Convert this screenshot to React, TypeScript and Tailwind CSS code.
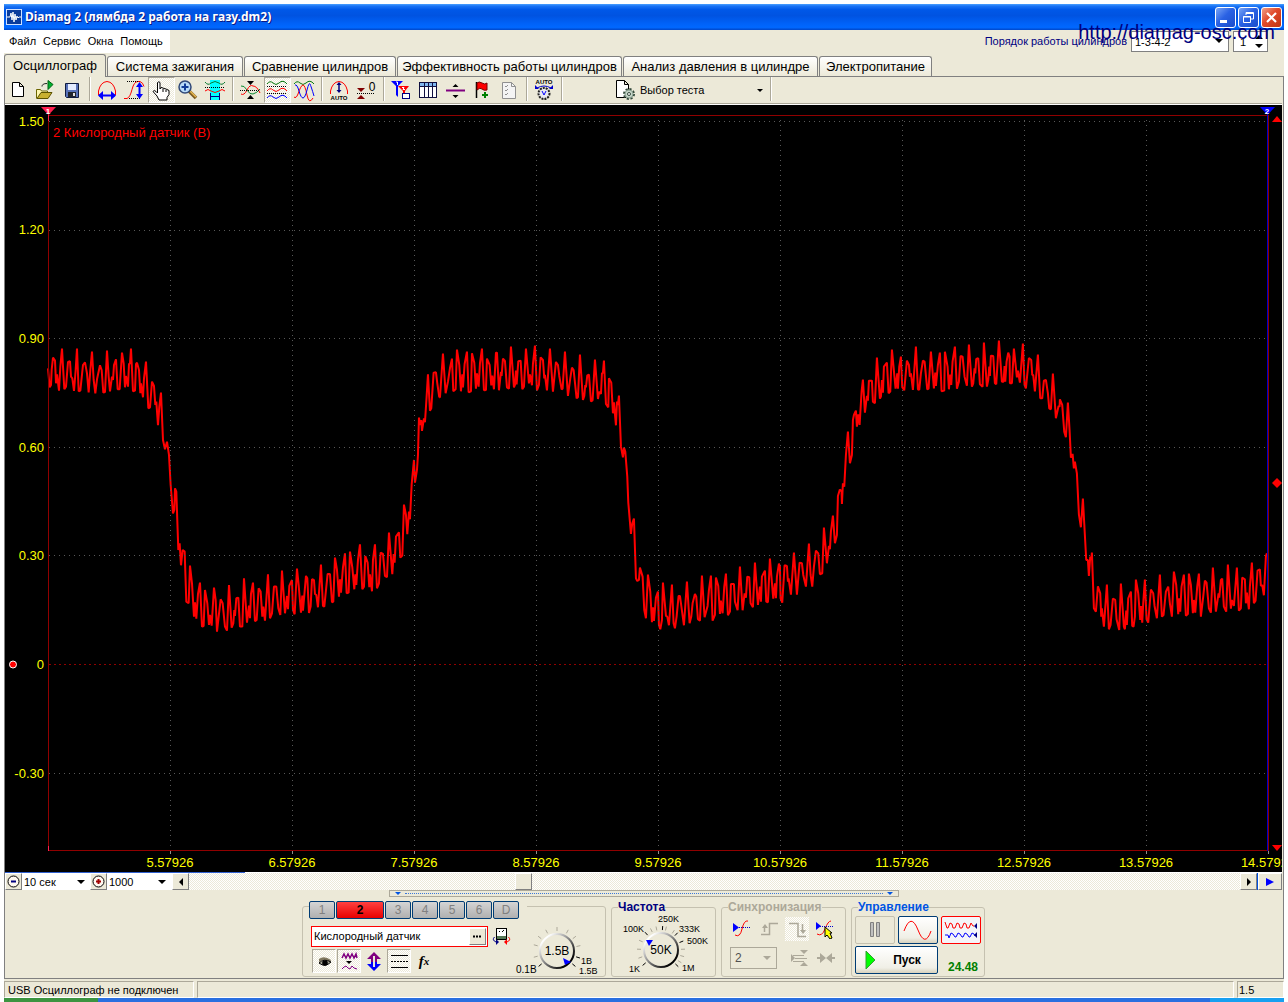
import React from "react";

const TRACE = [
  {
    shift: "translate(-24 645)",
    points:
      "24,115 29,172 33,165 35,120 39,83 45,92 48,160 51,133 57,182 61,110 66,56 69,110 73,178 78,170 84,96 90,94 93,140 97,145 102,183 107,120 111,56 116,184 121,182 129,105 135,97 141,130 146,187 151,120 156,65 161,150 166,190 171,148 180,106 185,120 190,188 195,186 201,62 206,140 210,184 216,140 219,150 222,105 228,88 233,178 239,178 246,68 251,100 255,172 258,138 264,170 267,102 270,100 273,56 279,184 285,182 288,102 291,98 297,120 301,190 303,160 309,202 312,145 318,95 325,235 330,232 336,155 342,168 346,225 349,215 354,286 358,230 363,188 369,330 375,358 381,335 387,375 392,465 399,550 403,540 405,475 409,485 415,660 419,640 423,706 428,660 434,665 439,815 446,820 450,707 456,760 462,860 465,817 469,866 474,792 480,758 486,890 491,888 495,780 502,820 507,885 510,855 515,887 522,773 527,810 531,905 537,852 542,808 548,820 555,890 561,902 567,765 575,893 580,880 583,840 585,858 589,805 595,803 600,890 607,890 612,745 621,878 627,827 630,865 633,792 639,758 645,874 650,870 656,775 662,785 667,860 670,830 675,872 684,733 690,865 696,850 702,770 709,770 715,835 721,855 726,722 735,850 741,798 744,838 748,768 756,750 759,840 764,853 771,716 776,765 783,848 787,797 789,842 798,738 802,745 807,849 812,830 816,748 822,750 825,792 829,795 834,832 843,704 849,828 853,830 863,732 870,732 876,817 880,815 885,683 891,720 897,800 900,748 903,788 909,712 915,670 920,790 926,788 930,665 937,712 943,778 946,733 949,765 954,690 960,643 967,778 972,770 976,678 983,698 988,772 990,733 996,784 999,690 1005,643 1011,775 1017,760 1022,668 1029,672 1035,738 1041,742 1047,608 1057,733 1061,672 1064,698 1068,620 1077,607 1081,683 1087,677 1092,524 1098,555 1102,613 1107,545 1110,568 1115,465 1122,390 1125,458 1131,420 1134,375 1137,263 1141,285 1144,270 1146,303 1152,265 1155,277 1160,200 1164,133 1170,242 1174,235 1181,128 1188,127 1192,160 1198,202",
  },
  {
    shift: "translate(1056 645)",
    points:
      "118,202 120,202 129,71 137,190 144,155 150,115 156,86 160,184 167,178 171,59 178,105 183,184 187,133 189,172 194,102 201,65 206,187 213,184 216,70 223,98 228,176 231,130 236,170 240,100 246,56 252,181 258,180 261,86 269,105 274,166 277,137 282,178 288,68 291,68 297,181 303,126 305,138 309,86 315,93 321,172 327,176 333,50 342,172 345,165 348,122 350,163 355,94 362,92 367,178 372,170 378,56 387,160 390,133 396,166 399,102 405,47 411,181 417,165 422,82 429,90 433,145 435,135 441,181 450,56 459,185 468,96 474,105 478,138 485,178 488,176 495,65 504,198 511,145 516,113 521,120 530,205 534,202 540,74 549,210 553,198 556,165 558,172 562,136 567,134 573,214 578,211 585,89 594,207 598,185 603,192 606,130 609,128 612,92 618,222 625,232 627,145 634,158 639,250 642,217 648,286 651,215 654,225 657,197 663,350 669,382 672,353 676,365 682,440 685,517 693,612 697,580 702,566 708,745 712,753 717,750 720,713 728,740 733,840 738,865 744,734 751,785 756,877 759,832 762,873 768,803 774,785 777,885 781,898 786,870 789,758 798,858 802,860 807,886 816,764 821,880 825,895 830,860 836,798 840,798 852,886 861,755 869,880 874,860 878,820 885,792 889,800 894,868 900,872 906,737 914,862 923,828 927,780 933,737 938,872 945,855 948,743 955,768 960,852 963,812 968,850 973,770 978,731 984,856 990,845 993,762 1002,762 1005,815 1013,841 1020,710 1028,841 1034,790 1038,803 1042,740 1048,742 1052,820 1059,832 1065,698 1074,825 1080,770 1083,815 1086,740 1095,722 1099,815 1104,817 1110,686 1120,806 1125,760 1128,805 1131,740 1137,701 1140,710 1142,805 1147,818 1154,706 1161,708 1164,755 1166,745 1173,794 1182,668 1191,794 1199,698 1206,700 1210,735 1218,770 1227,641 1232,735 1237,770 1242,710 1248,662 1255,670 1260,733 1267,730 1272,593 1281,700 1287,648 1290,658 1293,605 1299,557 1305,640 1311,615 1314,498 1320,478",
  },
  {
    shift: "translate(2316 645)",
    points:
      "60,478 65,485 66,522 69,460 73,470 78,375 84,305 90,400 96,375 99,270 102,255 108,242 111,290 115,253 119,285 125,185 129,149 135,248 141,198 144,212 147,152 156,152 159,215 165,220 171,83 180,206 183,200 186,150 189,188 192,110 201,98 206,190 211,185 216,59 227,176 232,130 234,176 238,110 243,80 247,172 253,181 261,92 267,105 270,140 273,130 279,180 288,50 294,178 298,180 303,130 309,92 314,95 322,178 326,176 333,65 342,175 346,128 348,168 354,105 360,68 365,184 373,182 375,65 383,110 387,178 391,134 394,165 398,95 405,50 411,176 417,155 422,78 428,80 434,140 441,167 447,44 456,170 460,160 464,115 466,130 469,87 475,85 480,163 488,170 492,38 501,170 505,150 508,110 510,138 513,77 520,78 525,160 529,163 537,32 546,155 551,155 554,108 556,155 560,95 565,68 569,80 570,160 576,160 582,56 591,142 594,122 600,158 609,41 614,165 618,175 627,84 634,90 637,135 640,135 645,184 654,74 661,205 667,205 672,152 678,150 684,190 688,235 693,238 699,131 708,265 716,228 719,230 720,208 727,225 733,305 738,322 744,218 749,300 753,383 758,372 762,415 765,395 771,430 777,553 783,592 789,506 793,580 799,690 804,690 807,738 811,680 814,690 816,668 822,835 828,845 834,769 841,790 844,860 846,835 852,890 861,764 867,898 872,885 879,806 886,810 890,868 898,900 903,761 912,890 915,898 919,842 921,885 925,805 933,785 937,888 941,890 945,860 948,749 955,790 961,870 964,828 967,878 970,820 975,749 980,868 985,878 993,779 1000,790 1004,828 1011,865 1020,734 1026,860 1031,855 1038,785 1045,770 1050,820 1056,860 1062,725 1069,765 1075,853 1078,805 1081,845 1085,770 1092,734 1098,857 1104,852 1107,731 1113,765 1119,850 1122,810 1126,848 1132,770 1137,731 1143,860 1150,800 1155,752 1160,758 1167,835 1173,848 1179,713 1188,845 1196,790 1198,803 1203,750 1207,746 1212,830 1219,845 1224,704 1233,836 1236,810 1242,828 1251,713 1257,842 1263,835 1267,743 1275,748 1278,820 1281,788 1287,838 1290,770 1296,698 1302,820 1307,812 1313,722 1320,718 1323,768 1327,765 1332,796 1338,680 1341,670",
  },
];

const Y_LABELS = ["1.50", "1.20", "0.90", "0.60", "0.30", "0", "-0.30"];
const X_LABELS = ["5.57926", "6.57926", "7.57926", "8.57926", "9.57926", "10.57926", "11.57926", "12.57926", "13.57926", "14.57926"];
const PLOT_W = 1221;
const PLOT_H = 736;
const gridY = (i: number) => Math.round(6 + i * 108.6) + 0.5;
const gridX = (i: number) => (i + 1) * 122 + 0.5;

const CHECKER = "bg-[repeating-conic-gradient(#ffffff_0_25%,#ece9d8_0_50%)] bg-[length:2px_2px]";

function Icon({ w = 24, h = 24, children }: { w?: number; h?: number; children: React.ReactNode }) {
  return (
    <svg width={w} height={h} viewBox={`0 0 ${w} ${h}`} fill="none" className="shrink-0" aria-hidden="true">
      {children}
    </svg>
  );
}

function ToolButton({ label, pressed, children }: { label: string; pressed?: boolean; children: React.ReactNode }) {
  return (
    <button
      type="button"
      aria-label={label}
      aria-pressed={pressed}
      className={`flex h-[26px] w-[27px] shrink-0 items-center ${
        pressed ? "border border-t-[#aca899] border-l-[#aca899] border-r-white border-b-white " + CHECKER : "pl-px"
      }`}
    >
      <Icon>{children}</Icon>
    </button>
  );
}

function ToolSep() {
  return (
    <div className="flex h-6 w-2 shrink-0 justify-center" role="separator">
      <div className="w-px bg-[#aca899]" />
      <div className="w-px bg-white" />
    </div>
  );
}

function TitleBar() {
  return (
    <header className="flex h-[26px] shrink-0 items-center bg-[linear-gradient(180deg,#4aa0ff_0%,#1b74f5_8%,#0058e8_22%,#0053e1_45%,#0062f8_75%,#0068ff_90%,#0046c8_100%)] px-[2px]">
      <svg width="16" height="16" viewBox="0 0 16 16" className="shrink-0" aria-hidden="true">
        <rect x="0.5" y="0.5" width="15" height="15" fill="#0a3c9c" stroke="#cfe0ff" />
        <path d="M1 8h3l1-4 1 7 1-8 1 10 1-8 1 6 1-4 1 2 1-1h2" stroke="#fff" fill="none" />
      </svg>
      <h1 className="ml-[3px] grow whitespace-nowrap font-['Noto_Sans','Open_Sans',sans-serif] text-[12px] leading-5 font-bold text-white [text-shadow:1px_1px_0_#0a1883]">
        Diamag 2 (лямбда 2 работа на газу.dm2)
      </h1>
      <div className="flex gap-[2px]">
        <button type="button" aria-label="Свернуть" className="flex h-[21px] w-[21px] items-center justify-center rounded-[3px] border border-white bg-[linear-gradient(135deg,#7aa5f5,#2a62e4_45%,#1a4ccb)]">
          <Icon w={17} h={17}><rect x="3" y="11" width="7" height="3" fill="#fff" /></Icon>
        </button>
        <button type="button" aria-label="Восстановить" className="flex h-[21px] w-[21px] items-center justify-center rounded-[3px] border border-white bg-[linear-gradient(135deg,#7aa5f5,#2a62e4_45%,#1a4ccb)]">
          <Icon w={17} h={17}>
            <path d="M6 6V3.500h7.500V10H11M6 4.500h7" stroke="#fff" />
            <path d="M3.500 7.500h7v6h-7zM3 8h8" stroke="#fff" />
          </Icon>
        </button>
        <button type="button" aria-label="Закрыть" className="flex h-[21px] w-[21px] items-center justify-center rounded-[3px] border border-white bg-[linear-gradient(135deg,#f0a088,#e0492a_45%,#c03412)]">
          <Icon w={17} h={17}><path d="M4 4l9 9M13 4l-9 9" stroke="#fff" strokeWidth="2.200" /></Icon>
        </button>
      </div>
    </header>
  );
}

function MenuRow() {
  return (
    <div className="flex h-6 shrink-0 items-start justify-between">
      <nav className="flex h-[23px] w-[166px] items-center gap-[7px] bg-white pl-[5px] text-[11px]">
        {["Файл", "Сервис", "Окна", "Помощь"].map((m) => (
          <button key={m} type="button">{m}</button>
        ))}
      </nav>
      <div className="flex items-center pt-px pr-4 text-[11px]">
        <label htmlFor="order" className="mr-1 whitespace-nowrap text-[#000080]">Порядок работы цилиндров</label>
        <div className="relative mr-1">
          <select id="order" className="block h-[21px] w-[98px] appearance-none border border-[#808080] bg-white px-[3px] leading-4">
            <option>1-3-4-2</option>
          </select>
          <span className="pointer-events-none absolute top-2 right-[6px] border-x-4 border-t-4 border-x-transparent border-t-black" />
        </div>
        <div className="relative">
          <input aria-label="Номер цилиндра" defaultValue="1" className="block h-[21px] w-[35px] border border-[#808080] bg-white px-[6px] leading-4" />
          <span className="pointer-events-none absolute top-1 right-[5px] border-x-4 border-b-4 border-x-transparent border-b-black" />
          <span className="pointer-events-none absolute right-[5px] bottom-1 border-x-4 border-t-4 border-x-transparent border-t-black" />
        </div>
      </div>
    </div>
  );
}

function Tabs() {
  const tabs: [string, string][] = [
    ["Осциллограф", "w-[102px]"],
    ["Система зажигания", "w-[136px]"],
    ["Сравнение цилиндров", "w-[152px]"],
    ["Эффективность работы цилиндров", "w-[225px]"],
    ["Анализ давления в цилиндре", "w-[195px]"],
    ["Электропитание", "w-[113px]"],
  ];
  return (
    <div role="tablist" className="flex h-[22px] shrink-0 items-end gap-px">
      {tabs.map(([t, w], i) => (
        <button
          key={t}
          type="button"
          role="tab"
          aria-selected={i === 0}
          className={`${w} shrink-0 rounded-t-[3px] border border-b-0 border-[#808080] text-center text-[13px] leading-[18px] whitespace-nowrap ${
            i === 0 ? "relative -mb-px h-[23px] bg-[#ece9d8]" : "h-5 bg-[linear-gradient(180deg,#ffffff,#ece9d8)]"
          }`}
        >
          {t}
        </button>
      ))}
    </div>
  );
}

function Toolbar() {
  return (
    <div className="flex h-[28px] shrink-0 items-start border-b border-b-white shadow-[inset_0_-1px_0_#aca899]">
      <ToolButton label="Новый">
        <path d="M6.500 4.500h7l4 4v10h-11zM13.500 4.500v4h4" fill="#fff" stroke="#000" />
      </ToolButton>
      <ToolButton label="Открыть">
        <path d="M3.500 20.500v-9h4l1 1.500h6v3" fill="#fff7b0" stroke="#6b6500" />
        <path d="M4 20.500l4-6h11l-4 6z" fill="#c8b030" stroke="#5a5200" />
        <path d="M9 8.500q0-3 5-3" stroke="#222" />
        <path d="M15 2.500l5 4-5 5z" fill="#00b030" stroke="#006010" />
      </ToolButton>
      <ToolButton label="Сохранить">
        <path d="M5.500 5.500h13v14h-12l-1-1z" fill="#5872b8" stroke="#101c40" />
        <rect x="8" y="6" width="8" height="6" fill="#e4ecff" />
        <rect x="8" y="14" width="8" height="5" fill="#20242c" />
        <rect x="13" y="15" width="2" height="3" fill="#e0e0e0" />
      </ToolButton>
      <ToolSep />
      <ToolButton label="Масштаб по горизонтали">
        <path d="M3.500 17v-4q2-9 8.500-9.500 6.500.500 8.500 9.500v4" stroke="#f00" />
        <path d="M4 17.500h16" stroke="#00f" strokeWidth="2" />
        <path d="M8 13v9l-5-4.500zM16 13v9l5-4.500z" fill="#00f" />
      </ToolButton>
      <ToolButton label="Масштаб по вертикали">
        <path d="M2 20.500h3q3-1 5-9t6-8h2q3 1 4 5" stroke="#f00" />
        <path d="M5 3.500h11M7 20.500h12" stroke="#000" strokeDasharray="1 1" />
        <path d="M17.500 6v13" stroke="#00f" strokeWidth="2" />
        <path d="M14 9l3.500-5L21 9zM14 16l3.500 5 3.500-5z" fill="#00f" />
      </ToolButton>
      <ToolButton label="Рука" pressed>
        <path d="M8.500 15V4.500q1.500-1.500 2.500 0V11l1-1.500 2 .5 1 .5 2 .5 1 .5 2 1v4l-2 3v2.500h-8l-2-4-4-4.500q1-2 3 0z" fill="#fff" stroke="#000" />
        <path d="M14 11v3M17 12v2" stroke="#000" />
      </ToolButton>
      <ToolButton label="Лупа">
        <path d="M13 13l7 7" stroke="#7a5a20" strokeWidth="3.500" />
        <path d="M14 13l6 6" stroke="#e8b850" strokeWidth="1.500" />
        <circle cx="9" cy="9" r="6" fill="#b8dcf8" stroke="#304878" strokeWidth="1.500" />
        <path d="M9 5.500v7M5.500 9h7" stroke="#103c98" strokeWidth="2" />
      </ToolButton>
      <ToolButton label="Выделить участок">
        <rect x="7" y="2" width="10" height="20" fill="#00ffff" />
        <path d="M2 4q3 4 6 1 4-3 8 0 3 3 6-1" stroke="#087a30" />
        <path d="M2 9.500h20" stroke="#000" strokeDasharray="1 1" />
        <path d="M2 13q3-3 6 0 4 3 8 0 3-3 6 0" stroke="#f00" />
        <path d="M7.500 15v7M16.500 15v7M8 18.500h8" stroke="#000080" />
      </ToolButton>
      <ToolSep />
      <ToolButton label="Совместить">
        <path d="M3 8q3-1 6 4t6 4q4-1 7-5" stroke="#0a8a30" />
        <path d="M3 16q3 2 6-4t6-4q4 0 7 7" stroke="#f00" />
        <path d="M2 12.500h20" stroke="#000" strokeDasharray="1 1" />
        <path d="M9 3h7l-3.500 4zM9 21h7l-3.500-4z" fill="#000" />
      </ToolButton>
      <ToolButton label="Раздельно" pressed>
        <path d="M2 6q3-4 6-1t6 0q4-4 8 1" stroke="#087a10" />
        <path d="M2 13q3-4 6-1t6 0q4-4 8 1" stroke="#f00" />
        <path d="M2 20q3-4 6-1t6 0q4-4 8 1" stroke="#00f" />
        <path d="M2 8.500h20M2 15.500h20" stroke="#000" strokeDasharray="1 1" />
      </ToolButton>
      <ToolButton label="Вместе">
        <path d="M2 6q3-4 6-1t6 0q4-4 8 1" stroke="#087a10" />
        <path d="M2 19q2 2 4-3 3-9 5-9t4 10 6 3" stroke="#f00" />
        <path d="M3 7q2-1 4 6t4 7q2 0 4-8t3-6 4 12" stroke="#00f" />
      </ToolButton>
      <ToolSep />
      <ToolButton label="Авто размах">
        <path d="M3.500 16v-3q2-9 8.500-9.500 6.500.500 8.500 9.500v3" stroke="#f00" />
        <path d="M12 5v9" stroke="#000080" strokeWidth="1.500" />
        <path d="M9.500 7l2.500-3 2.500 3zM9.500 12l2.500 3 2.500-3z" fill="#000080" />
        <text x="12" y="22" textAnchor="middle" fontSize="6" fontWeight="bold" fill="#000">AUTO</text>
      </ToolButton>
      <ToolButton label="Ноль">
        <path d="M3 10h8l-4 4zM3 21h8l-4-4z" fill="#800000" />
        <path d="M3 15.500h18" stroke="#000" strokeDasharray="1 1" />
        <text x="18" y="13" textAnchor="middle" fontSize="12" fill="#000">0</text>
      </ToolButton>
      <ToolSep />
      <ToolButton label="Фильтры">
        <path d="M2 3h12l-5 5v11l-2-2V8z" fill="#00f" />
        <path d="M9 8h11l-4 5v5l-2 1v-6z" fill="#f00" />
        <path d="M7 4h1.500v3M13 9.500h2l-1 2h2" stroke="#fff" />
        <rect x="13.500" y="15.500" width="7" height="5" fill="#fff" stroke="#000080" />
      </ToolButton>
      <ToolButton label="Таблица">
        <rect x="3.500" y="4.500" width="17" height="15" fill="#fff" stroke="#101040" />
        <rect x="4" y="5" width="16" height="3" fill="#80b8f0" />
        <path d="M4 8.500h16M8.500 5v14M12.500 5v14M16.500 5v14" stroke="#101040" />
      </ToolButton>
      <ToolButton label="Уровень">
        <path d="M3 12.500h19" stroke="#800080" strokeWidth="2" />
        <path d="M9.500 9l3-3 3 3zM9.500 17l3 3 3-3z" fill="#000" />
      </ToolButton>
      <ToolButton label="Добавить метку">
        <path d="M6.500 4v16" stroke="#000" strokeWidth="1.500" />
        <path d="M7 5q2-2 5 0t5 0v7q-3 1-5-1t-5 1z" fill="#f00" stroke="#700" />
        <path d="M15 14v6M12 17h6" stroke="#008000" strokeWidth="2" />
      </ToolButton>
      <ToolButton label="Список">
        <path d="M5.500 4.500h9l4 4v12h-13z" fill="#f4f4f4" stroke="#909090" />
        <path d="M14.500 4.500v4h4M8 8l1 1 2-2M8 12l1 1 2-2M8 16l1 1 2-2" stroke="#909090" />
      </ToolButton>
      <ToolSep />
      <ToolButton label="Авто поиск">
        <text x="12" y="6" textAnchor="middle" fontSize="6" fontWeight="bold" fill="#000">AUTO</text>
        <path d="M5 10q7-4 14 0" stroke="#00c" />
        <path d="M3 7v4h4zM21 7v4h-4z" fill="#00c" />
        <circle cx="12" cy="15.500" r="5.500" fill="#e8e8f0" stroke="#222" strokeWidth="2" strokeDasharray="2 1" />
        <path d="M10 13l2 4 2-4" stroke="#00f" />
      </ToolButton>
      <ToolSep />
      <button type="button" className="flex h-[26px] w-[201px] shrink-0 items-center pl-[46px] text-left text-[11px]">
        <Icon>
          <path d="M4.500 2.500h8l4 4v13h-12zM12.500 2.500v4h4" fill="#fff" stroke="#000" />
          <circle cx="17" cy="16" r="4.500" fill="#b8ccc0" stroke="#354a3c" strokeWidth="3" strokeDasharray="2 1.500" />
          <circle cx="17" cy="16" r="4" fill="#c4d4c8" stroke="#8aa090" />
          <circle cx="17" cy="16" r="1.500" fill="#fff" stroke="#354a3c" />
        </Icon>
        <span className="ml-1 grow">Выбор теста</span>
        <span className="mr-1 border-x-[3px] border-t-[3px] border-x-transparent border-t-black" />
      </button>
      <ToolSep />
    </div>
  );
}

function Chart() {
  return (
    <section aria-label="Осциллограмма" className="grid min-h-[400px] grow grid-cols-[43px_minmax(0,1fr)_13px] grid-rows-[10px_minmax(0,1fr)_21px] overflow-hidden bg-black text-[13px]">
      <div />
      <svg width="100%" height="10" className="overflow-visible" aria-hidden="true">
        <path d="M-7 2H8L.500 10z" fill="#ff2050" />
        <text x="0" y="9" textAnchor="middle" fontSize="8" fontWeight="bold" fill="#fff">1</text>
        <svg x="100%" className="overflow-visible">
          <path d="M-9 2H6l-7.500 8z" fill="#0000ff" />
          <text x="-2" y="9" textAnchor="middle" fontSize="8" fontWeight="bold" fill="#fff">2</text>
        </svg>
      </svg>
      <div />

      <svg width="100%" height="100%" className="block min-h-0 overflow-visible">
        {Y_LABELS.map((t, i) => (
          <text key={t} x="39" y={`${((gridY(i) + 4) / PLOT_H) * 100}%`} textAnchor="end" fill="#ffff00">{t}</text>
        ))}
        <circle cx="8" cy={`${(gridY(5) / PLOT_H) * 100}%`} r="3.500" fill="#ff0000" stroke="#ffffff" />
      </svg>
      <div className="relative min-h-0">
        <svg width="100%" height="100%" viewBox={`0 0 ${PLOT_W} ${PLOT_H}`} preserveAspectRatio="none" fill="none" className="absolute inset-0 overflow-visible">
          <g transform="scale(0.3333)" stroke="#ff0000" strokeWidth="6" strokeLinejoin="bevel">
            {TRACE.map((s) => (
              <polyline key={s.shift} points={s.points} transform={s.shift} />
            ))}
          </g>
          <g stroke="#585858" strokeDasharray="1 4">
            {Y_LABELS.map((t, i) => (
              <path key={t} d={`M1 ${gridY(i)}H1220`} stroke={i === 5 ? "#900000" : "#585858"} strokeDasharray={i === 5 ? "2 3" : "1 4"} />
            ))}
            {X_LABELS.slice(0, 9).map((t, i) => (
              <path key={t} d={`M${gridX(i)} 5V735`} />
            ))}
          </g>
          <path d="M0 .5H1221M.5 0V736M0 735.500H1221M1220.500 0V736" stroke="#900000" />
          <path d="M1219.500 0V736" stroke="#0000c8" />
          <path d="M.5 0v6M.5 731v5" stroke="#ff2050" />
        </svg>
        <p className="absolute top-[10px] left-[5px] text-[13px] leading-[15px] whitespace-nowrap text-[#ff0000]">2 Кислородный датчик (В)</p>
      </div>
      <svg width="13" height="100%" className="block min-h-0 overflow-visible" aria-hidden="true">
        <path d="M3 7h10L8 1z" fill="#ff0000" />
        <svg y="50%" className="overflow-visible"><path d="M3 0l5-5 5 5-5 5z" fill="#ff0000" /></svg>
        <svg y="100%" className="overflow-visible"><path d="M3-6h10L8 0z" fill="#ff0000" /></svg>
      </svg>

      <div />
      <svg width="100%" height="21" className="overflow-visible">
        {X_LABELS.map((t, i) => (
          <g key={t}>
            <text x={`${((gridX(i) - 0.5) / PLOT_W) * 100}%`} y="16" textAnchor="middle" fill="#ffff00">{t}</text>
            <rect x={`${((gridX(i) - 0.5) / PLOT_W) * 100}%`} y="0" width="1" height="3" fill="#909090" />
          </g>
        ))}
      </svg>
      <div />
    </section>
  );
}

const BEVEL = "flex h-[17px] w-[17px] shrink-0 items-center justify-center border border-t-white border-l-white border-r-[#808080] border-b-[#808080] bg-[#ece9d8]";

function ScrollRow() {
  return (
    <div className="flex shrink-0 flex-col">
      <div className="h-px bg-white"><div className="h-px w-[240px] bg-[#3060d0]" /></div>
      <div className="flex h-[17px] text-[11px]">
        <button type="button" aria-label="Уменьшить" className={BEVEL}>
          <Icon w={13} h={13}><circle cx="6.500" cy="6.500" r="5.500" stroke="#000" fill="#fff8f0" /><path d="M4 6.500h5" stroke="#000080" strokeWidth="2" /></Icon>
        </button>
        <div className="relative">
          <select aria-label="Длительность" className="block h-[17px] w-[68px] appearance-none bg-white px-[2px] leading-4"><option>10 сек</option></select>
          <span className="pointer-events-none absolute top-[7px] right-[5px] border-x-4 border-t-4 border-x-transparent border-t-black" />
        </div>
        <button type="button" aria-label="Увеличить" className={BEVEL}>
          <Icon w={13} h={13}><circle cx="6.500" cy="6.500" r="5.500" stroke="#000" fill="#fff8f0" /><path d="M4 6.500h5M6.500 4v5" stroke="#a00000" strokeWidth="2" /></Icon>
        </button>
        <div className="relative">
          <select aria-label="Масштаб" className="block h-[17px] w-[65px] appearance-none bg-white px-[2px] leading-4"><option>1000</option></select>
          <span className="pointer-events-none absolute top-[7px] right-[6px] border-x-4 border-t-4 border-x-transparent border-t-black" />
        </div>
        <button type="button" aria-label="Влево" className={BEVEL}>
          <span className="border-y-4 border-r-4 border-y-transparent border-r-black" />
        </button>
        <div className={"flex grow " + CHECKER}>
          <div className="w-[31%]" />
          <div className={BEVEL} />
        </div>
        <button type="button" aria-label="Вправо" className={BEVEL}>
          <span className="border-y-4 border-l-4 border-y-transparent border-l-black" />
        </button>
        <div className="w-px bg-[#0050e0]" />
        <button type="button" aria-label="Воспроизвести" className="flex h-[17px] w-6 items-center justify-center border border-t-white border-l-white border-r-[#808080] border-b-[#808080]">
          <span className="border-y-4 border-l-8 border-y-transparent border-l-[#0000ff]" />
        </button>
      </div>
    </div>
  );
}

function Knob({ cx, cy, value, pointer, id }: { cx: number; cy: number; value: string; pointer: string; id: string }) {
  return (
    <g>
      <defs>
        <linearGradient id={id} x1="0" y1="0" x2="1" y2="1">
          <stop offset="0.15" stopColor="#ffffff" />
          <stop offset="0.5" stopColor="#808080" />
          <stop offset="0.85" stopColor="#000000" />
        </linearGradient>
      </defs>
      <circle cx={cx} cy={cy} r="17" fill="#ece9d8" stroke={`url(#${id})`} strokeWidth="2" />
      <path d={pointer} fill="#0000ff" />
      <text x={cx} y={cy + 4} textAnchor="middle" fontSize="12" fill="#000">{value}</text>
    </g>
  );
}

function Ticks({ cx, cy, angles, color }: { cx: number; cy: number; angles: number[]; color: string }) {
  return (
    <g stroke={color}>
      {angles.map((a) => {
        const r = (a * Math.PI) / 180;
        return <path key={a} d={`M${cx + 20 * Math.sin(r)} ${cy - 20 * Math.cos(r)}L${cx + 24 * Math.sin(r)} ${cy - 24 * Math.cos(r)}`} />;
      })}
    </g>
  );
}

function ChannelGroup() {
  const small = "flex h-6 w-6 items-center justify-center";
  const sunk = small + " border border-t-[#aca899] border-l-[#aca899] border-r-white border-b-white " + CHECKER;
  return (
    <div className="mt-[5px] flex h-[71px] w-[304px] rounded-[3px] border border-[#c5c1b0] pl-[6px]">
      <div className="-mt-[6px] flex flex-col">
        <div className="mb-[7px] flex gap-px bg-[#ece9d8] pr-2">
          {["1", "2", "3", "4", "5", "6", "D"].map((c) => (
            <button
              key={c}
              type="button"
              aria-pressed={c === "2"}
              className={`h-[18px] rounded-[2px] border border-[#003c74] text-[12px] leading-4 ${
                c === "2" ? "w-[48px] bg-[linear-gradient(180deg,#ff4040,#e80000)] font-bold text-black" : "w-[26px] bg-[linear-gradient(180deg,#d4d4d4,#b0b0b0)] text-[#808080]"
              }`}
            >
              {c}
            </button>
          ))}
        </div>
        <div className="flex items-center pl-[2px]">
          <div className="flex h-[21px] w-[177px] items-center border border-[#ff0000] bg-white pr-px">
            <input aria-label="Датчик" defaultValue="Кислородный датчик" className="min-w-0 grow bg-white px-[2px] text-[11px] outline-none" />
            <button type="button" aria-label="Выбрать датчик" className="flex h-[17px] w-[17px] items-center justify-center border border-t-white border-l-white border-r-[#808080] border-b-[#808080] bg-[#ece9d8]">
              <Icon w={9} h={3}><path d="M0 1.500h2M3 1.500h2M6 1.500h2" stroke="#000" strokeWidth="2" /></Icon>
            </button>
          </div>
          <button type="button" aria-label="Сменить прибор" className="ml-1">
            <Icon w={19} h={19}>
              <rect x="4.500" y="1.500" width="10" height="11" fill="#fff" stroke="#000" />
              <rect x="5" y="9" width="9" height="3" fill="#557755" />
              <path d="M7 5l1-1M10 5l2-2" stroke="#000" />
              <path d="M2.500 10q-3 3 1.500 5" stroke="#000080" />
              <path d="M4 12v6l3-3z" fill="#000080" />
              <path d="M16.500 10q3 3-1.500 5" stroke="#f00" />
              <path d="M15 12v6l-3-3z" fill="#f00" />
            </Icon>
          </button>
        </div>
        <div className="mt-[2px] flex gap-px pl-[3px]">
          <button type="button" aria-label="Видимость" className={sunk}>
            <Icon w={22} h={22}>
              <path d="M6 9q5-4 12 1l-1 2q-5-4-11 0z" fill="#807860" />
              <path d="M6 13q5-5 12-1-6 6-12 1z" fill="#a8a898" stroke="#000" />
              <circle cx="12" cy="13" r="2.800" fill="#000" />
            </Icon>
          </button>
          <button type="button" aria-label="Сглаживание" className={sunk}>
            <Icon w={22} h={22}>
              <path d="M4 8l2-4 2 4 2-4 2 4 2-4 2 4 2-4 1 4" stroke="#800080" strokeWidth="1.500" />
              <path d="M8 11h6l-3 3z" fill="#000" />
              <path d="M4 19l2-2 2-1 2 2 2 1 2-3 2 2 3 1" stroke="#800080" />
            </Icon>
          </button>
          <button type="button" aria-label="Инверсия" className={small}>
            <Icon w={22} h={22}>
              <path d="M11 2l7 7h-4v3H8V9H4z" fill="#800080" />
              <path d="M11 21l7-7h-4v-2H8v2H4z" fill="#00f" />
              <path d="M11 6v11" stroke="#ece9d8" strokeWidth="2" />
            </Icon>
          </button>
          <button type="button" aria-label="Пределы" className={sunk}>
            <Icon w={22} h={22}><path d="M3 5.500h17M3 17.500h17" stroke="#000" /><path d="M3 11.500h17" stroke="#000" strokeDasharray="2 1" /></Icon>
          </button>
          <button type="button" aria-label="Функция" className={small + " font-['Liberation_Serif',serif] text-[15px] leading-5 font-bold italic"}>
            f<span className="text-[11px]">x</span>
          </button>
        </div>
      </div>
      <svg width="93" height="68" viewBox="0 0 93 68" className="-ml-[17px] shrink-0" fontSize="10" role="img" aria-label="Диапазон 1.5В">
        <Ticks cx={47} cy={44} angles={[-105, -75, -52, -28, 0, 28, 52, 77]} color="#aca899" />
        <Ticks cx={47} cy={44} angles={[-130, 107, 130]} color="#000" />
        <Knob cx={47} cy={44} value="1.5В" pointer="M53 51l8 4-6 3z" id="rangeKnob" />
        <text x="6" y="66">0.1В</text>
        <text x="71" y="57" fontSize="9">1В</text>
        <text x="69" y="67" fontSize="9">1.5В</text>
      </svg>
    </div>
  );
}

const BOX = "rounded-[3px] border border-[#c5c1b0]";
const LEGEND = "ml-[6px] h-3 text-[12px] leading-3 font-bold whitespace-nowrap";

function FrequencyGroup() {
  return (
    <fieldset className={BOX + " h-[76px] w-[105px] min-w-0"}>
      <legend className={LEGEND + " text-[#000080]"}>Частота</legend>
      <svg width="103" height="64" viewBox="0 0 103 64" className="-mt-px block" fontSize="9" role="img" aria-label="Частота 50K">
        <Ticks cx={49} cy={38} angles={[-110, -88, -66, -26, -12, 13, 34, 88, 106, 122]} color="#aca899" />
        <Ticks cx={49} cy={38} angles={[-130, -42, 4, 44, 68, 134]} color="#000" />
        <Knob cx={49} cy={38} value="50K" pointer="M34 28l7 0-4 6z" id="freqKnob" />
        <text x="46" y="10">250K</text>
        <text x="11" y="20">100K</text>
        <text x="67" y="20">333K</text>
        <text x="75" y="32">500K</text>
        <text x="17" y="60">1K</text>
        <text x="70" y="59">1M</text>
      </svg>
    </fieldset>
  );
}

function SyncGroup() {
  return (
    <fieldset className={BOX + " h-[76px] w-[125px] min-w-0"}>
      <legend className={LEGEND + " text-[#aca899]"}>Синхронизация</legend>
      <div className="flex items-center gap-1 pt-1 pl-[7px]">
        <button type="button" aria-label="Синхронизация" className="flex h-6 w-6 items-center justify-center">
          <Icon w={20} h={20}>
            <path d="M4 16q5 3 7-6t6-8" stroke="#f00" /><path d="M2 8.500h17" stroke="#00c" strokeDasharray="1 1" /><path d="M2 4v9l6-4.500z" fill="#00f" />
          </Icon>
        </button>
        <button type="button" disabled aria-label="По фронту" className="flex h-6 w-6 items-center justify-center">
          <Icon w={20} h={20}><path d="M2 15.500h8.500v-11H19M5.500 13V7" stroke="#aca899" strokeWidth="1.500" /><path d="M3 9l3-4 3 4z" fill="#aca899" /></Icon>
        </button>
        <button type="button" disabled aria-label="По спаду" className={"flex h-6 w-6 items-center justify-center " + CHECKER}>
          <Icon w={20} h={20}><path d="M2 4.500h9v13h8M15.500 5v8" stroke="#aca899" strokeWidth="1.500" /><path d="M13 11l3 4 3-4z" fill="#aca899" /></Icon>
        </button>
        <button type="button" aria-label="Указать уровень" className="flex h-6 w-6 items-center justify-center">
          <Icon w={20} h={20}>
            <path d="M2 15q5 3 8-5t6-8" stroke="#f00" /><path d="M1 7.500h18" stroke="#00c" strokeDasharray="1 1" /><path d="M1 3v8l5-4z" fill="#00f" />
            <path d="M10 8l7 6h-2l2 5-2 1-3-4-2 2z" fill="#ff0" stroke="#000" />
          </Icon>
        </button>
      </div>
      <div className="flex items-center pt-[6px] pl-2">
        <div className="relative">
          <select disabled aria-label="Канал синхронизации" className="block h-[22px] w-[47px] appearance-none border border-[#aca899] bg-[#ece9d8] px-1 text-[12px] leading-4 text-[#505050] opacity-100"><option>2</option></select>
          <span className="pointer-events-none absolute top-[9px] right-[6px] border-x-4 border-t-4 border-x-transparent border-t-[#aca899]" />
        </div>
        <button type="button" disabled aria-label="Уровень" className="ml-3">
          <Icon w={20} h={20}><path d="M2 6v8l4-4z" fill="#aca899" /><path d="M4 7.500h11M6 10.500h12M4 13.500h11" stroke="#aca899" /><path d="M11 2h8l-4 4zM11 18h8l-4-4z" fill="#aca899" /></Icon>
        </button>
        <button type="button" disabled aria-label="Центр" className="ml-[7px]">
          <Icon w={20} h={20}><path d="M1 10h5M13 10h6" stroke="#aca899" strokeWidth="2" /><path d="M4 5v10l6-5zM16 5v10l-6-5z" fill="#aca899" /></Icon>
        </button>
      </div>
    </fieldset>
  );
}

function ControlGroup() {
  const btn = "flex h-[28px] w-10 items-center justify-center rounded-[2px] border";
  return (
    <fieldset className={BOX + " h-[76px] w-[134px] min-w-0"}>
      <legend className={LEGEND + " text-[#0054e3]"}>Управление</legend>
      <div className="flex gap-[3px] pt-[3px] pl-[3px]">
        <button type="button" disabled aria-label="Пауза" className={btn + " border-[#c5c1b0]"}>
          <Icon w={14} h={18}><path d="M2.500 1.500h3v14h-3zM8.500 1.500h3v14h-3z" fill="#c0c0c0" stroke="#808080" /></Icon>
        </button>
        <button type="button" aria-label="Одиночный" className={btn + " border-[#003c74] bg-[linear-gradient(180deg,#ffffff,#f0efe6_80%,#d8d2bd)]"}>
          <Icon w={32} h={24}><path d="M2 13Q9-6 16 12t13 1" stroke="#f00" /></Icon>
        </button>
        <button type="button" aria-label="Непрерывный" className={btn + " border-[#ff0000] bg-[#f4f4f8]"}>
          <Icon w={36} h={24}>
            <path d="M2 4l2 6h1l2-5 2 1 1 4h2l2-5 2 1 1 4h2l2-5 2 1 1 4h2l2-5 2 3 1 0" stroke="#f00" />
            <path d="M2 17h3l1 3 2-5 2 1 2 3h1l2-4 2 1 2 3h1l2-4 2 1 2 3h1l2-4 2 1 1 2" stroke="#00f" />
            <path d="M34 5v6l-3-3zM34 14v6l-3-3z" fill="#000080" />
          </Icon>
        </button>
      </div>
      <div className="flex items-end gap-[10px] pt-[2px] pl-[3px]">
        <button type="button" className="flex h-[28px] w-[83px] items-center rounded-[2px] border border-[#003c74] bg-[linear-gradient(180deg,#ffffff,#f0efe6_80%,#d8d2bd)] pl-[9px] text-[12px] font-bold">
          <Icon w={12} h={20}><path d="M1 1v18l9-9z" fill="#00ff00" stroke="#30a030" /></Icon>
          <span className="grow text-center">Пуск</span>
        </button>
        <output className="text-[12px] leading-[14px] font-bold text-[#008000]">24.48</output>
      </div>
    </fieldset>
  );
}

function BottomPanel() {
  return (
    <div className="flex h-[88px] shrink-0 flex-col items-center">
      <div className="flex h-[7px] w-[510px] items-center justify-between border border-[#aca899] px-[5px]">
        <span className="border-x-[3px] border-t-[3px] border-x-transparent border-t-[#0054e3]" />
        <span className="mx-1 grow border-t border-dotted border-[#3c78d8]" />
        <span className="border-x-[3px] border-t-[3px] border-x-transparent border-t-[#0054e3]" />
      </div>
      <div className="flex gap-[5px] pt-1">
        <ChannelGroup />
        <FrequencyGroup />
        <SyncGroup />
        <ControlGroup />
      </div>
    </div>
  );
}

export default function App() {
  return (
    <div className="relative flex min-h-screen flex-col bg-white px-1 pt-1 font-['Liberation_Sans',Arial,sans-serif] text-black">
      <TitleBar />
      <div className="flex grow flex-col bg-[#ece9d8]">
        <MenuRow />
        <Tabs />
        <main className="flex grow flex-col border border-[#808080] pr-px">
          <Toolbar />
          <Chart />
          <ScrollRow />
          <BottomPanel />
        </main>
        <footer className="flex h-[19px] shrink-0 gap-[3px] pt-[2px] text-[11px] leading-4">
          <div className="w-[190px] border border-t-[#aca899] border-l-[#aca899] border-r-white border-b-white pl-[3px] whitespace-nowrap">USB Осциллограф не подключен</div>
          <div className="grow border border-t-[#aca899] border-l-[#aca899] border-r-white border-b-white" />
          <div className="w-[47px] border border-t-[#aca899] border-l-[#aca899] border-r-white border-b-white pl-px">1.5</div>
        </footer>
      </div>
      <div className="flex h-1 shrink-0 bg-[#2a6fe0]">
        <div className="w-[94px] bg-[#3c9440]" />
        <div className="grow" />
        <div className="w-[74px] bg-[#18a0f0]" />
      </div>
      <a href="http://diamag-osc.com" className="absolute top-[22px] right-[13px] text-[20px] leading-5 whitespace-nowrap text-[#000080]">http://diamag-osc.com</a>
    </div>
  );
}
